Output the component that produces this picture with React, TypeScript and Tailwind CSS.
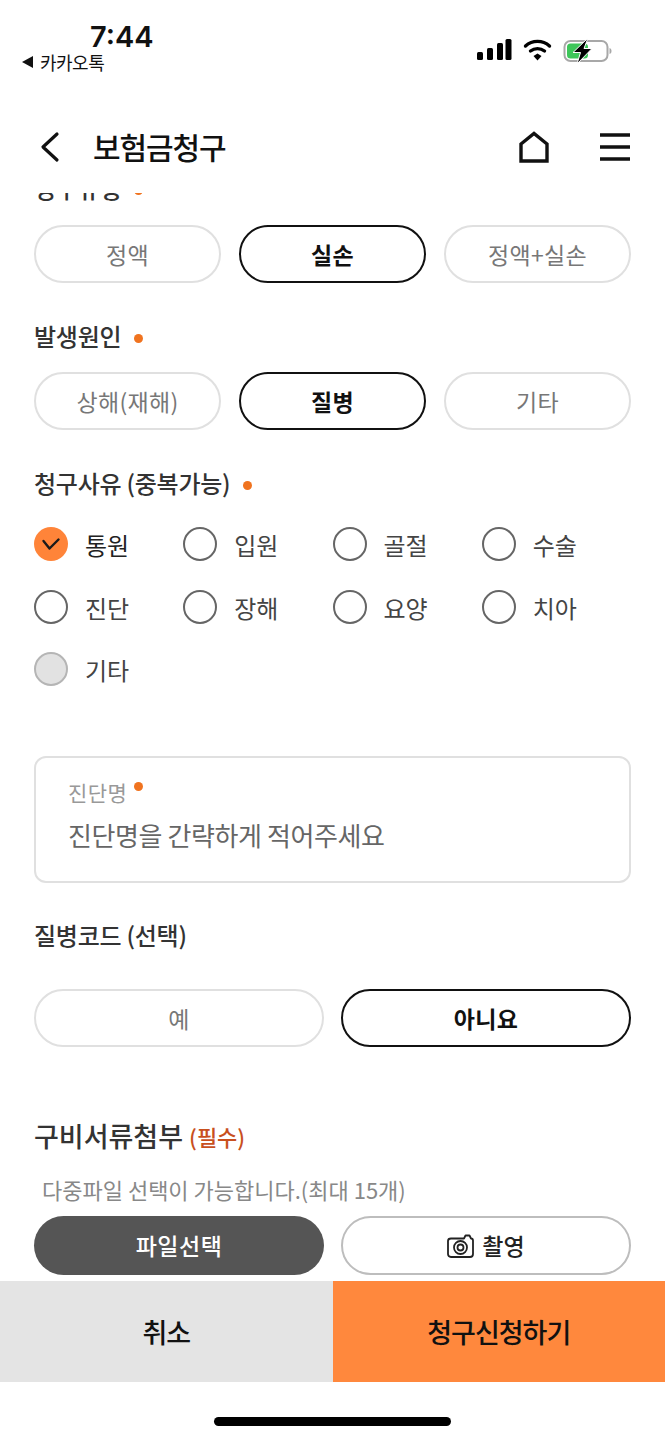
import { ReactNode } from 'react';

const font = { fontFamily: '"Noto Sans CJK KR", "Noto Sans", sans-serif' };

function Dot({ className = '' }: { className?: string }) {
  return <span className={`inline-block h-[9px] w-[9px] rounded-full bg-[#f0731f] ${className}`} />;
}

function Label({ children, dot = true }: { children: ReactNode; dot?: boolean }) {
  return (
    <div className="flex h-[28px] items-center text-[24px] font-medium leading-[28px] tracking-[-0.25px] text-[#333]">
      {children}
      {dot && <Dot className="ml-[13px] mt-[4px]" />}
    </div>
  );
}

function Pill({ text, active }: { text: string; active?: boolean }) {
  return (
    <button
      className={`flex h-[58px] items-center justify-center rounded-full bg-white text-[23px] tracking-[0.3px] ${
        active ? 'border-2 border-[#111] font-bold text-[#111]' : 'border-2 border-[#e0e0e0] text-[#777]'
      }`}
    >
      {text}
    </button>
  );
}

function Radio({ text, state }: { text: string; state?: 'checked' | 'disabled' }) {
  return (
    <div className="flex h-[34px] items-center gap-[17px]">
      {state === 'checked' ? (
        <span className="flex h-[34px] w-[34px] items-center justify-center rounded-full bg-[#ff8439]">
          <svg width="20" height="14" viewBox="0 0 20 14" fill="none" stroke="#1a1a1a" strokeWidth="2.4" strokeLinecap="round" strokeLinejoin="round">
            <path d="M2.500 4 8.500 11.500 17.500 2.500" />
          </svg>
        </span>
      ) : state === 'disabled' ? (
        <span className="h-[34px] w-[34px] rounded-full border-2 border-[#b5b5b5] bg-[#e2e2e2]" />
      ) : (
        <span className="h-[34px] w-[34px] rounded-full border-2 border-[#666] bg-white" />
      )}
      <span className={`pt-[2px] text-[24px] leading-[34px] tracking-[-0.2px] ${state === 'checked' ? 'text-[#222]' : 'text-[#444]'}`}>{text}</span>
    </div>
  );
}

function StatusBar() {
  return (
    <div className="relative h-[100px] shrink-0">
      <div className="absolute left-[90px] top-[18px] text-[29px] font-semibold leading-[38px] text-[#111]" style={{ fontFamily: 'Inter, sans-serif' }}>
        7:44
      </div>
      <div className="absolute left-[22px] top-[50px] flex items-center gap-[7px] text-[18px] leading-[24px] text-[#111]">
        <span className="h-0 w-0 border-y-[6px] border-r-[11px] border-y-transparent border-r-[#111]" />
        <span className="tracking-[-0.5px]">카카오톡</span>
      </div>
      <svg className="absolute left-[476px] top-[36px]" width="136" height="28" viewBox="0 0 136 28">
        <rect x="1" y="16" width="6" height="8" rx="1.500" fill="#000" />
        <rect x="11" y="12" width="6" height="12" rx="1.500" fill="#000" />
        <rect x="21" y="7" width="6" height="17" rx="1.500" fill="#000" />
        <rect x="29.500" y="3" width="6" height="21" rx="1.500" fill="#000" />
        <path d="M49.500 10a18 18 0 0 1 24 0" fill="none" stroke="#000" strokeWidth="3.400" strokeLinecap="round" />
        <path d="M54.500 15a11.500 11.500 0 0 1 14 0" fill="none" stroke="#000" strokeWidth="3.400" strokeLinecap="round" />
        <path d="M57.500 20 61.500 17.500l4 2.500-4 4.500z" fill="#000" />
        <rect x="88.500" y="5" width="43" height="20" rx="6" fill="none" stroke="#a8a8a8" strokeWidth="2" />
        <rect x="91" y="7.500" width="21" height="15" rx="3.500" fill="#3ec65a" />
        <path d="M133.500 12c1.500.5 2 1.500 2 3s-.5 2.500-2 3z" fill="#a8a8a8" />
        <path d="M112 2 97 16.500h7.500L101 28l15-15.500h-8z" fill="#000" stroke="#fff" strokeWidth="1" />
      </svg>
    </div>
  );
}

function Header() {
  return (
    <header className="flex h-[93px] shrink-0 items-center pl-[40px] pr-[34px]">
      <svg width="20" height="32" viewBox="0 0 20 32" fill="none" stroke="#111" strokeWidth="3.200" strokeLinecap="round" strokeLinejoin="round">
        <path d="M17 3 3 16l14 13" />
      </svg>
      <h1 className="mb-[2px] ml-[33px] text-[30px] font-medium leading-[40px] tracking-[-1.1px] text-[#111]">보험금청구</h1>
      <svg className="ml-auto" width="32" height="32" viewBox="0 0 32 32" fill="none" stroke="#111" strokeWidth="3.400" strokeLinejoin="miter">
        <path d="M3 30V13L16 2.500 29 13v17z" />
      </svg>
      <svg className="ml-[49px]" width="32" height="30" viewBox="0 0 32 30" fill="none" stroke="#111" strokeWidth="3.400">
        <path d="M1 3h30M1 15h30M1 27h30" />
      </svg>
    </header>
  );
}

export default function App() {
  return (
    <div className="flex h-[1440px] w-[665px] flex-col overflow-hidden bg-white" style={font}>
      <StatusBar />
      <Header />

      {/* Scrolled form, the first label is cut off by the header */}
      <main className="min-h-0 flex-1 overflow-hidden px-[34px]">
        <div className="-mt-[19px]">
          <Label>청구유형</Label>
          <div className="mt-[23px] grid grid-cols-3 gap-[18px]">
            <Pill text="정액" />
            <Pill text="실손" active />
            <Pill text="정액+실손" />
          </div>

          <div className="mt-[39px]">
            <Label>발생원인</Label>
          </div>
          <div className="mt-[22px] grid grid-cols-3 gap-[18px]">
            <Pill text="상해(재해)" />
            <Pill text="질병" active />
            <Pill text="기타" />
          </div>

          <div className="mt-[39px]">
            <Label>청구사유 (중복가능)</Label>
          </div>
          <div className="mt-[30px] grid grid-cols-4 gap-y-[28.500px]">
            <Radio text="통원" state="checked" />
            <Radio text="입원" />
            <Radio text="골절" />
            <Radio text="수술" />
            <Radio text="진단" />
            <Radio text="장해" />
            <Radio text="요양" />
            <Radio text="치아" />
            <Radio text="기타" state="disabled" />
          </div>

          <div className="mt-[70px] flex h-[127px] flex-col rounded-[12px] border-2 border-[#e0e0e0] pl-[32px] pt-[19px]">
            <div className="flex h-[32px] items-center text-[21px] tracking-[0.4px] text-[#999]">
              진단명
              <Dot className="mb-[14px] ml-[7px]" />
            </div>
            <div className="mt-[7px] text-[26px] leading-[38px] tracking-[-0.4px] text-[#666]">진단명을 간략하게 적어주세요</div>
          </div>

          <div className="mt-[38px]">
            <Label dot={false}>질병코드 (선택)</Label>
          </div>
          <div className="mt-[40px] grid grid-cols-2 gap-[17px]">
            <Pill text="예" />
            <Pill text="아니요" active />
          </div>

          <div className="mt-[71px] flex h-[36px] items-center">
            <span className="text-[27px] font-medium tracking-[0px] text-[#333]">구비서류첨부</span>
            <span className="ml-[6px] text-[22px] font-medium text-[#c8501e]">(필수)</span>
          </div>
          <p className="mt-[19px] pl-[8px] text-[22px] leading-[32px] tracking-[0px] text-[#888]">다중파일 선택이 가능합니다.(최대 15개)</p>
          <div className="mt-[11px] grid grid-cols-2 gap-[17px]">
            <button className="flex h-[59px] items-center justify-center rounded-full bg-[#555] text-[23px] font-medium tracking-[0.5px] text-white">파일선택</button>
            <button className="flex h-[59px] items-center justify-center gap-[8px] rounded-full border-2 border-[#bdbdbd] bg-white text-[23px] font-medium text-[#222]">
              <svg width="27" height="24" viewBox="0 0 27 24" fill="none" stroke="#222" strokeWidth="1.800" strokeLinejoin="round">
                <path d="M4 4.500h13l1.500-3h4L24 4.500c1.500 0 2 1 2 2V20c0 1.800-1 3-3 3H4c-2 0-3-1.200-3-3V7c0-1.500 1-2.500 3-2.500z" />
                <circle cx="13.500" cy="13.500" r="6.500" />
                <circle cx="13.500" cy="13.500" r="3" />
              </svg>
              촬영
            </button>
          </div>
        </div>
      </main>

      {/* Bottom actions */}
      <div className="grid h-[101px] shrink-0 grid-cols-2 text-[27px] font-medium tracking-[-1px] text-[#111]">
        <button className="bg-[#e4e4e4] pt-[1px]">취소</button>
        <button className="bg-[#ff883d] pt-[1px]">청구신청하기</button>
      </div>
      <div className="flex h-[58px] shrink-0 items-start justify-center pt-[35px]">
        <div className="h-[9px] w-[237px] rounded-full bg-black" />
      </div>
    </div>
  );
}
